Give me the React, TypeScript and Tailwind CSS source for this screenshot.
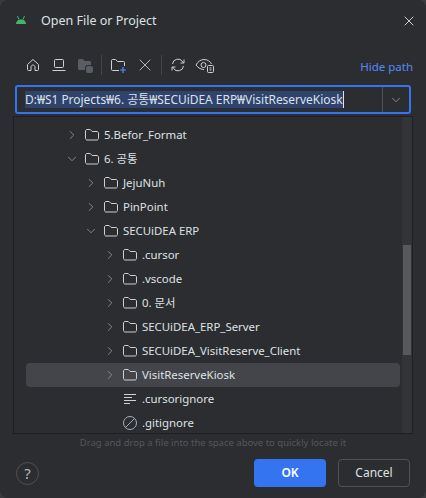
import { ChevronDown, ChevronRight, X } from "lucide-react";

const rows = [
  { name: "5.Befor_Format", depth: 0, open: false },
  { name: "6. 공통", depth: 0, open: true },
  { name: "JejuNuh", depth: 1, open: false },
  { name: "PinPoint", depth: 1, open: false },
  { name: "SECUiDEA ERP", depth: 1, open: true },
  { name: ".cursor", depth: 2, open: false },
  { name: ".vscode", depth: 2, open: false },
  { name: "0. 문서", depth: 2, open: false },
  { name: "SECUiDEA_ERP_Server", depth: 2, open: false },
  { name: "SECUiDEA_VisitReserve_Client", depth: 2, open: false },
  { name: "VisitReserveKiosk", depth: 2, open: false, selected: true },
  { name: ".cursorignore", depth: 2, file: "text" },
  { name: ".gitignore", depth: 2, file: "ignore" },
];

const indent = ["pl-[38px]", "pl-[57px]", "pl-[76px]"];

function Folder() {
  return (
    <svg width="16" height="16" viewBox="0 0 16 16" fill="none" stroke="#ced0d6" strokeWidth="1">
      <path d="M1.500 4c0-.8.7-1.500 1.500-1.500h3.200l2 2H13c.8 0 1.500.7 1.500 1.500v5.500c0 .8-.7 1.500-1.500 1.500H3c-.8 0-1.500-.7-1.500-1.500z" />
    </svg>
  );
}

function TextFile() {
  return (
    <svg width="16" height="16" viewBox="0 0 16 16" fill="none" stroke="#ced0d6" strokeWidth="1">
      <path d="M2 3.500h12M2 6.500h8M2 9.500h12M2 12.500h6" />
    </svg>
  );
}

function IgnoreFile() {
  return (
    <svg width="16" height="16" viewBox="0 0 16 16" fill="none" stroke="#a8adb4" strokeWidth="1">
      <circle cx="8" cy="8" r="6.500" />
      <path d="M3.500 12.500l9-9" />
    </svg>
  );
}

function Toolbar() {
  const stroke = "#ced0d6";
  return (
    <div className="flex h-[26px] items-center pl-[25px]">
      <svg width="16" height="16" viewBox="0 0 16 16" fill="none" stroke={stroke}>
        <path d="M2.500 7.500L8 2.500l5.500 5v5c0 .6-.4 1-1 1H10V10c0-1-.9-2-2-2s-2 1-2 2v3.500H3.500c-.6 0-1-.4-1-1z" />
      </svg>
      <svg className="ml-[10px]" width="16" height="16" viewBox="0 0 16 16" fill="none" stroke={stroke}>
        <rect x="3.500" y="2.500" width="9" height="8" rx="1" />
        <path d="M1.500 13.500h13" />
      </svg>
      <svg className="ml-[10px]" width="16" height="16" viewBox="0 0 16 16" fill="#5a5d63">
        <path d="M1 3.500C1 2.700 1.700 2 2.500 2h3.200l2 2h4.800c.8 0 1.500.7 1.500 1.500V8H11a3 3 0 0 0-3 3v2H2.500C1.700 13 1 12.300 1 11.500z" />
        <rect x="9" y="9" width="7" height="7" rx="2" />
      </svg>
      <div className="ml-[8px] mr-[8px] h-[20px] w-px bg-[#43454a]" />
      <svg width="16" height="16" viewBox="0 0 16 16" fill="none" stroke={stroke}>
        <path d="M9 13.500H2.500c-.6 0-1-.4-1-1V3.500c0-.6.4-1 1-1h3l2 2h6c.6 0 1 .4 1 1V9" />
        <path d="M13 10v6M10 13h6" stroke="#548af7" strokeWidth="1.200" />
      </svg>
      <X className="ml-[9px] text-[#ced0d6]" size={20} strokeWidth={1} />
      <div className="ml-[6px] mr-[8px] h-[20px] w-px bg-[#43454a]" />
      <svg width="16" height="16" viewBox="0 0 16 16" fill="none" stroke={stroke}>
        <path d="M2.500 7A5.500 5.500 0 0 1 12.500 4.500l1 1.500M13.500 9A5.500 5.500 0 0 1 3.500 11.500l-1-1.500" />
        <path d="M14 2.500V6h-3.500M2 13.500V10h3.500" />
      </svg>
      <svg className="ml-[9px]" width="20" height="16" viewBox="0 0 20 16" fill="none" stroke={stroke}>
        <path d="M9 12.500C5 12.500 2.500 10 1 8c1.500-3 4.500-5.500 8-5.500S15.500 4.500 16.500 7" />
        <circle cx="8.500" cy="8" r="2.500" />
        <rect x="12.500" y="8.500" width="6" height="7" rx="1" />
        <path d="M14.500 11h2M14.500 13h2" />
      </svg>
    </div>
  );
}

export default function App() {
  return (
    <div className="h-[498px] w-[426px] bg-[#3a3b3e] font-['Noto_Sans','Noto_Sans_CJK_KR',sans-serif] text-[11.400px] text-[#dfe1e5]">
      <div className="flex h-full flex-col rounded-[8px] bg-[#2b2d30]">
        <div className="flex h-[42px] items-center justify-between pl-[16px] pr-[9px]">
          <div className="flex items-center gap-[15px]">
            <svg width="10" height="8" viewBox="0 0 10 8" fill="#3fb86c" className="mb-[2px]">
              <path d="M0 8c0-2.500 2-4.500 5-4.500S10 5.500 10 8z" />
              <path d="M1.500 0l1.500 3.500M8.500 0L7 3.500" stroke="#3fb86c" strokeWidth="1" />
            </svg>
            <span className="text-[12.500px]">Open File or Project</span>
          </div>
          <X size={16} strokeWidth={1.300} className="text-[#e8e9eb]" />
        </div>

        <div className="mt-[10px] flex items-start justify-between pr-[13px]">
          <Toolbar />
          <span className="pt-[6px] text-[11.500px] text-[#548af7]">Hide path</span>
        </div>

        <div className="mx-[15px] mt-[7px] flex h-[29px] items-center rounded-[3px] border-2 border-[#3574f0]">
          <div className="flex-1 pl-[8px] pt-[1px] text-[11.950px]">
            <span className="whitespace-nowrap border-r border-[#dfe1e5] bg-[#2e436e]">
              D:₩S1 Projects₩6. 공통₩SECUiDEA ERP₩VisitReserveKiosk
            </span>
          </div>
          <div className="flex h-full w-[27px] items-center justify-center border-l border-[#4e5157]">
            <ChevronDown size={14} strokeWidth={1.300} className="text-[#9da0a8]" />
          </div>
        </div>

        <div className="mx-[13px] mt-[2px] flex h-[318px] border border-[#1e1f22]">
          <div className="flex-1 overflow-hidden pt-[6px]">
            {rows.map((row) => (
              <div
                key={row.name}
                className={`ml-[12px] mr-[2px] flex h-[24px] items-center rounded-[4px] ${indent[row.depth]} ${row.selected ? "bg-[#43454a]" : ""}`}
              >
                <div className="flex w-[15px] justify-center">
                  {row.file ? null : row.open ? (
                    <ChevronDown size={14} strokeWidth={1.300} className="text-[#9da0a8]" />
                  ) : (
                    <ChevronRight size={14} strokeWidth={1.300} className="text-[#9da0a8]" />
                  )}
                </div>
                <div className="ml-[5px] mr-[4px]">
                  {row.file === "text" ? <TextFile /> : row.file === "ignore" ? <IgnoreFile /> : <Folder />}
                </div>
                <span className="whitespace-nowrap">{row.name}</span>
              </div>
            ))}
          </div>
          <div className="w-[10px] bg-[#323437] pt-[128px]">
            <div className="mx-px h-[110px] bg-[#58595c]" />
          </div>
        </div>

        <div className="mt-[2px] text-center text-[9.500px] text-[#55575c]">
          Drag and drop a file into the space above to quickly locate it
        </div>

        <div className="mt-[9px] flex items-center justify-between px-[16px]">
          <div className="flex h-[23px] w-[23px] items-center justify-center rounded-full border border-[#4e5157] text-[15px] text-[#b4b8bf]">
            ?
          </div>
          <div className="flex gap-[12px]">
            <button className="h-[28px] w-[72px] rounded-[4px] bg-[#3574f0] text-[12px] font-semibold text-white">OK</button>
            <button className="h-[28px] w-[72px] rounded-[4px] border border-[#4e5157] text-[12px]">Cancel</button>
          </div>
        </div>
      </div>
    </div>
  );
}
